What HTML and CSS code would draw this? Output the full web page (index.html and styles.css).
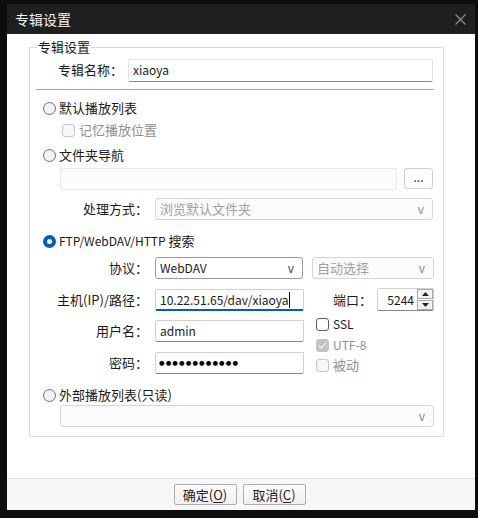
FILE: index.html
```html
<!DOCTYPE html>
<html lang="zh-CN">
<head>
<meta charset="utf-8">
<title>专辑设置</title>
<link rel="stylesheet" href="styles.css">
</head>
<body>
<div class="dialog">
  <div class="titlebar">
    <span class="title">专辑设置</span>
    <svg class="close" width="11" height="11" viewBox="0 0 11 11"><path d="M0.5 0.5 L10.5 10.5 M10.5 0.5 L0.5 10.5" stroke="#8c8c8c" stroke-width="1.2" fill="none"/></svg>
  </div>
  <div class="content">
    <div class="group">
      <span class="group-title">专辑设置</span>

      <div class="row name-row">
        <span class="lbl name-lbl">专辑名称：</span>
        <div class="input name-input lat">xiaoya</div>
      </div>
      <div class="sep"></div>

      <div class="opt r-default"><span class="radio"></span><span>默认播放列表</span></div>
      <div class="opt c-remember disabled"><span class="check dis"></span><span>记忆播放位置</span></div>
      <div class="opt r-folder"><span class="radio"></span><span>文件夹导航</span></div>
      <div class="row path-row">
        <div class="input dis-input path-input"></div>
        <div class="dots-btn">...</div>
      </div>
      <div class="row mode-row">
        <span class="lbl form-lbl">处理方式：</span>
        <div class="combo dis-combo mode-combo"><span>浏览默认文件夹</span><span class="arrow">v</span></div>
      </div>

      <div class="opt r-ftp"><span class="radio on"></span><span><span class="lat">FTP/WebDAV/HTTP</span> 搜索</span></div>
      <div class="row proto-row">
        <span class="lbl form-lbl">协议：</span>
        <div class="combo proto-combo"><span class="lat">WebDAV</span><span class="arrow">v</span></div>
        <div class="combo dis-combo enc-combo"><span>自动选择</span><span class="arrow">v</span></div>
      </div>
      <div class="ftp-body">
        <div class="ftp-left">
          <div class="row host-row">
            <span class="lbl form-lbl">主机(IP)/路径：</span>
            <div class="input field focus lat">10.22.51.65/dav/xiaoya<span class="caret"></span></div>
          </div>
          <div class="row user-row">
            <span class="lbl form-lbl">用户名：</span>
            <div class="input field lat">admin</div>
          </div>
          <div class="row pass-row">
            <span class="lbl form-lbl">密码：</span>
            <div class="input field pass">●●●●●●●●●●●●</div>
          </div>
        </div>
        <div class="ftp-right">
          <div class="port-row">
            <span class="port-lbl">端口：</span>
            <div class="spin">
              <div class="spin-val lat">5244</div>
              <div class="spin-btns">
                <div class="spin-btn"><svg width="7" height="4" viewBox="0 0 7 4"><path d="M0 4 L3.5 0 L7 4 Z" fill="#222"/></svg></div>
                <div class="spin-btn"><svg width="7" height="4" viewBox="0 0 7 4"><path d="M0 0 L3.5 4 L7 0 Z" fill="#222"/></svg></div>
              </div>
            </div>
          </div>
          <div class="copt c-ssl"><span class="check"></span><span class="lat">SSL</span></div>
          <div class="copt c-utf disabled"><span class="check dis-on"><svg width="9" height="7" viewBox="0 0 9 7"><path d="M1 3.5 L3.5 6 L8 1" stroke="#fff" stroke-width="1.1" fill="none"/></svg></span><span class="lat">UTF-8</span></div>
          <div class="copt c-pasv disabled"><span class="check dis"></span><span>被动</span></div>
        </div>
      </div>

      <div class="opt r-ext"><span class="radio"></span><span>外部播放列表(只读)</span></div>
      <div class="row ext-row">
        <div class="combo dis-combo ext-combo"><span></span><span class="arrow">v</span></div>
      </div>
    </div>
  </div>
  <div class="footer">
    <div class="btn">确定(<u>O</u>)</div>
    <div class="btn">取消(<u>C</u>)</div>
  </div>
</div>
</body>
</html>
```

FILE: styles.css
```css
* { box-sizing: border-box; }
html, body { margin: 0; padding: 0; }
body {
  background: #0d0d0d;
  width: 478px;
  height: 518px;
  overflow: hidden;
  font-family: "Noto Sans CJK SC", sans-serif;
  font-size: 13px;
  line-height: 18px;
  color: #1a1a1a;
}
.lat { font-size: 12px; }
.dialog {
  margin: 4px 0 0 7px;
  width: 468px;
  height: 506px;
  background: #fff;
  display: flex;
  flex-direction: column;
}
.titlebar {
  height: 30px;
  background: #1f1f1f;
  display: flex;
  align-items: center;
  justify-content: space-between;
  padding: 0 9px 0 8px;
  flex: none;
}
.title {
  color: #f4f4f4;
  font-size: 14px;
}
.close { display: block; }
.content {
  flex: 1;
  padding: 13px 0 0 22px;
}
.group {
  position: relative;
  width: 415px;
  height: 390px;
  border: 1px solid #dcdcdc;
  padding: 0;
}
.group-title {
  position: absolute;
  left: 7px;
  top: -10px;
  background: #fff;
  padding: 0 1px;
  line-height: 18px;
}
.row {
  display: flex;
  align-items: center;
  height: 22px;
}
.lbl {
  text-align: right;
  flex: none;
  white-space: nowrap;
}
.name-row { margin-top: 11px; }
.name-lbl { width: 93px; margin-right: 5px; }
.form-lbl { width: 118px; margin-right: 7px; }
.input {
  height: 22px;
  border: 1px solid #e3e3e3;
  border-bottom-color: #878787;
  border-radius: 2px;
  padding: 0 4px;
  line-height: 20px;
  background: #fff;
  white-space: nowrap;
}
.name-input { width: 305px; height: 23px; }
.sep {
  margin: 8px 0 0 6px;
  width: 398px;
  height: 1px;
  background: #a3a3a3;
}
.opt {
  display: flex;
  align-items: center;
  height: 18px;
  white-space: nowrap;
}
.opt .radio { margin-left: 13px; margin-right: 3px; }
.opt .check { margin-left: 32px; margin-right: 4px; }
.r-default { margin-top: 9px; }
.c-remember { margin-top: 4px; }
.r-folder { margin-top: 7px; }
.disabled { color: #8f8f8f; }
.radio {
  width: 13px;
  height: 13px;
  border-radius: 50%;
  border: 1px solid #6f6f6f;
  background: #f4f4f4;
  flex: none;
  display: flex;
  align-items: center;
  justify-content: center;
}
.radio.on {
  border: none;
  background: #005fb8;
}
.radio.on::after {
  content: "";
  width: 5px;
  height: 5px;
  border-radius: 50%;
  background: #fff;
}
.check {
  width: 13px;
  height: 13px;
  border: 1px solid #5c5c5c;
  border-radius: 3px;
  background: #fff;
  flex: none;
  display: flex;
  align-items: center;
  justify-content: center;
}
.check.dis { border-color: #c6c6c6; background: #f7f7f7; }
.check.dis-on { border-color: #c3c3c3; background: #c3c3c3; }
.path-row { margin-top: 4px; padding-left: 30px; }
.dis-input { border-color: #e8e8e8; background: #fcfcfc; }
.path-input { width: 337px; }
.dots-btn {
  margin-left: 7px;
  width: 29px;
  height: 21px;
  border: 1px solid #cfcfcf;
  border-radius: 3px;
  background: #fdfdfd;
  text-align: center;
  line-height: 16px;
  font-size: 12px;
  color: #333;
  align-self: flex-start;
}
.mode-row { margin-top: 8px; }
.combo {
  height: 22px;
  border: 1px solid #9a9a9a;
  border-radius: 3px;
  background: #fff;
  display: flex;
  align-items: center;
  justify-content: space-between;
  padding: 0 8px 0 4px;
  white-space: nowrap;
}
.combo .arrow {
  font-size: 12px;
  color: #444;
}
.dis-combo { border-color: #d6d6d6; background: #fbfbfb; color: #a0a0a0; }
.dis-combo .arrow { color: #8a8a8a; }
.mode-combo { width: 278px; }
.r-ftp { margin-top: 12px; }
.proto-row { margin-top: 7px; }
.proto-combo { width: 148px; }
.enc-combo { width: 122px; margin-left: 9px; }
.ftp-body { display: flex; }
.ftp-left { width: 274px; }
.host-row { margin-top: 10px; }
.user-row { margin-top: 9px; }
.pass-row { margin-top: 10px; }
.field { width: 149px; border-color: #d0d0d0; border-bottom-color: #868686; }
.field.focus { border-bottom: 2px solid #005fb8; display: flex; align-items: center; padding-top: 1px; }
.caret {
  display: inline-block;
  width: 1px;
  height: 16px;
  background: #000;
  margin-left: 1px;
}
.pass {
  font-family: "DejaVu Sans", sans-serif;
  font-size: 6.4px;
  letter-spacing: 1.1px;
  color: #000;
  padding-left: 3px;
}
.ftp-right { padding-left: 10px; }
.port-row {
  display: flex;
  align-items: center;
  margin-top: 9px;
  height: 23px;
}
.port-lbl {
  width: 63px;
  padding-left: 19px;
  white-space: nowrap;
}
.spin {
  display: flex;
  width: 57px;
  height: 23px;
  border: 1px solid #d0d0d0;
  border-bottom-color: #868686;
  border-radius: 2px;
  background: #fff;
}
.spin-val {
  flex: 1;
  text-align: right;
  padding-right: 3px;
  line-height: 21px;
}
.spin-btns { width: 16px; display: flex; flex-direction: column; gap: 1px; }
.spin-btn {
  flex: 1;
  border: 1px solid #a8a8a8;
  background: #f3f3f3;
  display: flex;
  align-items: center;
  justify-content: center;
}
.copt {
  display: flex;
  align-items: center;
  height: 20px;
  white-space: nowrap;
}
.copt .check { margin-left: 2px; margin-right: 4px; }
.c-ssl { margin-top: 3px; }
.c-utf { margin-top: 1px; }
.r-ext { margin-top: 11px; }
.ext-row { margin-top: 1px; padding-left: 30px; }
.ext-combo { width: 374px; }
.footer {
  height: 32px;
  flex: none;
  border-top: 1px solid #e3e3e3;
  background: #f7f7f7;
  display: flex;
  justify-content: center;
  align-items: flex-start;
  gap: 6px;
  padding: 5px 3px 0 0;
}
.btn {
  width: 63px;
  height: 21px;
  border: 1px solid #acacac;
  border-radius: 2px;
  background: linear-gradient(#fdfdfd, #f0f0f0);
  text-align: center;
  line-height: 19px;
  color: #222;
}
.btn u { text-underline-offset: 2px; }
```
